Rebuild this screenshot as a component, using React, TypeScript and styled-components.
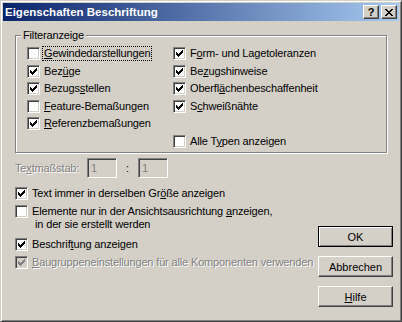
import React from "react";
import styled, { createGlobalStyle } from "styled-components";

const face = "#D4D0C8";
const shadow = "#808080";
const darkShadow = "#404040";

const GlobalStyle = createGlobalStyle`
  html, body { margin: 0; padding: 0; background: ${face}; }
  body {
    font-family: "Liberation Sans", Arial, sans-serif;
    font-size: 11px;
    letter-spacing: -0.15px;
    color: #000;
  }
  #root { width: 402px; height: 322px; }
`;

const Window = styled.div`
  box-sizing: border-box;
  width: 402px;
  height: 322px;
  padding: 2px;
  background: ${face};
  border: 1px solid;
  border-color: ${face} ${darkShadow} ${darkShadow} ${face};
  box-shadow: inset 1px 1px #fff, inset -1px -1px ${shadow};
  display: flex;
  flex-direction: column;
`;

const TitleBar = styled.div`
  height: 18px;
  flex: none;
  display: flex;
  align-items: center;
  padding: 0 2px 0 2px;
  background: linear-gradient(to right, #0a246a, #a6caf0);
`;

const Title = styled.span`
  flex: 1;
  color: #fff;
  font-weight: bold;
  font-size: 11.5px;
  letter-spacing: 0;
  line-height: 18px;
  white-space: nowrap;
`;

const CaptionButton = styled.span<{ $gap?: boolean }>`
  box-sizing: border-box;
  width: 16px;
  height: 14px;
  margin-left: ${(p) => (p.$gap ? "2px" : "0")};
  display: flex;
  align-items: center;
  justify-content: center;
  background: ${face};
  border: 1px solid;
  border-color: #fff ${darkShadow} ${darkShadow} #fff;
  box-shadow: inset -1px -1px ${shadow};
  font-weight: bold;
  font-size: 11px;
  line-height: 12px;
  svg { display: block; }
`;

const Body = styled.div`
  flex: 1;
  display: flex;
  flex-direction: column;
  padding: 8px 6px 0 12px;
`;

const Group = styled.fieldset`
  margin: 0 6px 0 0;
  padding: 3px 0 2px 11px;
  min-width: 0;
  border: 1px solid ${shadow};
  box-shadow: 1px 1px 0 #fff, inset 1px 1px 0 #fff;
`;

const Legend = styled.legend`
  margin-left: -6px;
  padding: 0 2px;
  line-height: 13px;
  background: ${face};
`;

const Columns = styled.div`
  display: flex;
`;

const Column = styled.div<{ $width?: number }>`
  display: flex;
  flex-direction: column;
  width: ${(p) => (p.$width ? `${p.$width}px` : "auto")};
`;

const Row = styled.label<{ $h?: number }>`
  display: flex;
  align-items: center;
  gap: 4px;
  height: ${(p) => p.$h ?? 18}px;
  line-height: 13px;
  white-space: nowrap;
`;

const Box = styled.span<{ $disabled?: boolean }>`
  box-sizing: border-box;
  flex: none;
  width: 13px;
  height: 13px;
  padding: 1px;
  border: 1px solid;
  border-color: ${shadow} #fff #fff ${shadow};
  box-shadow: inset 1px 1px ${darkShadow}, inset -1px -1px ${face};
  background: ${(p) => (p.$disabled ? face : "#fff")};
  svg { display: block; }
`;

const Text = styled.span<{ $disabled?: boolean; $focus?: boolean }>`
  color: ${(p) => (p.$disabled ? shadow : "#000")};
  text-shadow: ${(p) => (p.$disabled ? "1px 1px 0 #fff" : "none")};
  outline: ${(p) => (p.$focus ? "1px dotted #000" : "none")};
  padding: 0 1px;
  margin-left: -1px;
`;

const Lower = styled.div`
  display: flex;
  justify-content: space-between;
  margin-top: 5px;
`;

const Options = styled.div`
  display: flex;
  flex-direction: column;
  min-width: 0;
`;

const ScaleRow = styled.div`
  display: flex;
  align-items: center;
  height: 20px;
  margin-bottom: 6px;
`;

const ScaleLabel = styled.span`
  width: 72px;
  color: ${shadow};
  text-shadow: 1px 1px 0 #fff;
`;

const Edit = styled.input`
  box-sizing: border-box;
  width: 30px;
  height: 20px;
  margin: 0;
  padding: 0 0 0 3px;
  font: inherit;
  color: ${shadow};
  background: ${face};
  border: 1px solid;
  border-color: ${shadow} #fff #fff ${shadow};
  box-shadow: inset 1px 1px ${darkShadow}, inset -1px -1px ${face};
  outline: none;
  opacity: 1;
`;

const Colon = styled.span`
  width: 21px;
  text-align: center;
`;

const Continuation = styled.div`
  line-height: 13px;
  margin: -2px 0 4px 20px;
  white-space: nowrap;
`;

const Buttons = styled.div`
  flex: none;
  display: flex;
  flex-direction: column;
  gap: 9px;
  padding-top: 68px;
`;

const PushButton = styled.button<{ $default?: boolean }>`
  box-sizing: border-box;
  width: 75px;
  height: 21px;
  margin: 0;
  padding: 0;
  font: inherit;
  color: #000;
  background: ${face};
  border: 1px solid;
  border-color: ${(p) => (p.$default ? "#000" : `#fff ${darkShadow} ${darkShadow} #fff`)};
  box-shadow: ${(p) =>
    p.$default
      ? `inset 1px 1px #fff, inset -1px -1px ${shadow}`
      : `inset -1px -1px ${shadow}`};
`;

// "&" marks the access key, like in a Windows resource file
function Mnemonic({ label }: { label: string }) {
  const i = label.indexOf("&");
  if (i < 0) return <>{label}</>;
  return (
    <>
      {label.slice(0, i)}
      <u>{label[i + 1]}</u>
      {label.slice(i + 2)}
    </>
  );
}

function CheckMark({ color }: { color: string }) {
  return (
    <svg width="9" height="9" viewBox="0 0 9 9" shapeRendering="crispEdges">
      <path
        fill={color}
        d="M1 3h1v3H1zM2 4h1v3H2zM3 5h1v3H3zM4 4h1v3H4zM5 3h1v3H5zM6 2h1v3H6zM7 1h1v3H7z"
      />
    </svg>
  );
}

type CheckProps = {
  label: string;
  checked?: boolean;
  disabled?: boolean;
  focus?: boolean;
  h?: number;
};

function Check({ label, checked, disabled, focus, h }: CheckProps) {
  return (
    <Row $h={h}>
      <Box $disabled={disabled}>
        {checked && <CheckMark color={disabled ? shadow : "#000"} />}
      </Box>
      <Text $disabled={disabled} $focus={focus}>
        <Mnemonic label={label} />
      </Text>
    </Row>
  );
}

const leftFilters: CheckProps[] = [
  { label: "&Gewindedarstellungen", focus: true },
  { label: "Bez&üge", checked: true },
  { label: "Bezugs&stellen", checked: true },
  { label: "&Feature-Bemaßungen" },
  { label: "&Referenzbemaßungen", checked: true },
];

const rightFilters: CheckProps[] = [
  { label: "F&orm- und Lagetoleranzen", checked: true },
  { label: "Be&zugshinweise", checked: true },
  { label: "Oberfl&ächenbeschaffenheit", checked: true },
  { label: "S&chweißnähte", checked: true },
];

export default function App() {
  return (
    <>
      <GlobalStyle />
      <Window>
        <TitleBar>
          <Title>Eigenschaften Beschriftung</Title>
          <CaptionButton>?</CaptionButton>
          <CaptionButton $gap>
            <svg width="8" height="7" viewBox="0 0 8 7" shapeRendering="crispEdges">
              <path
                fill="#000"
                d="M0 0h2v1H0zM6 0h2v1H6zM1 1h2v1H1zM5 1h2v1H5zM2 2h4v1H2zM3 3h2v1H3zM2 4h4v1H2zM1 5h2v1H1zM5 5h2v1H5zM0 6h2v1H0zM6 6h2v1H6z"
              />
            </svg>
          </CaptionButton>
        </TitleBar>
        <Body>
          <Group>
            <Legend>Filteranzeige</Legend>
            <Columns>
              <Column $width={146}>
                {leftFilters.map((f) => (
                  <Check key={f.label} {...f} h={17.5} />
                ))}
              </Column>
              <Column>
                {rightFilters.map((f) => (
                  <Check key={f.label} {...f} h={17.5} />
                ))}
                <Row $h={17.5} />
                <Check label="Alle T&ypen anzeigen" h={17.5} />
              </Column>
            </Columns>
          </Group>
          <Lower>
            <Options>
              <ScaleRow>
                <ScaleLabel>
                  <Mnemonic label="Te&xtmaßstab:" />
                </ScaleLabel>
                <Edit disabled value="1" readOnly />
                <Colon>:</Colon>
                <Edit disabled value="1" readOnly />
              </ScaleRow>
              <Check label="Text immer in derselben Gr&öße anzeigen" checked />
              <Check label="Elemente nur in der Ansichtsausrichtung &anzeigen," />
              <Continuation>in der sie erstellt werden</Continuation>
              <Check label="Beschrif&tung anzeigen" checked />
              <Check
                label="&Baugruppeneinstellungen für alle Komponenten verwenden"
                checked
                disabled
              />
            </Options>
            <Buttons>
              <PushButton $default>OK</PushButton>
              <PushButton>Abbrechen</PushButton>
              <PushButton>
                <Mnemonic label="&Hilfe" />
              </PushButton>
            </Buttons>
          </Lower>
        </Body>
      </Window>
    </>
  );
}
